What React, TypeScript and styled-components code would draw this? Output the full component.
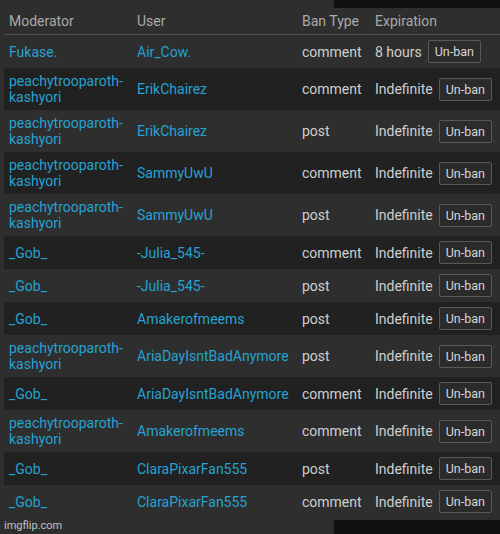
import React from "react";
import styled, { createGlobalStyle } from "styled-components";

const GlobalStyle = createGlobalStyle`
  html, body {
    margin: 0;
    padding: 0;
    background: #2e2e2e;
  }
  body {
    font-family: Roboto, "Noto Sans", "Liberation Sans", sans-serif;
    -webkit-font-smoothing: antialiased;
  }
`;

const Page = styled.div`
  width: 500px;
  height: 534px;
  overflow: hidden;
  background: #2e2e2e;
  display: flex;
  flex-direction: column;
`;

const Strip = styled.div<{ $h: number }>`
  display: flex;
  justify-content: space-between;
  align-items: flex-end;
  height: ${(p) => p.$h}px;
  flex: none;
`;

const BlackBlock = styled.div<{ $h: number }>`
  width: 166px;
  height: ${(p) => p.$h}px;
  background: #111111;
`;

const Watermark = styled.span`
  font-size: 11px;
  color: #c2c2c2;
  padding-left: 4px;
  line-height: 14px;
  align-self: center;
`;

const Table = styled.div`
  margin-left: 4px;
  display: flex;
  flex-direction: column;
`;

const Row = styled.div<{ $dark?: boolean }>`
  display: grid;
  grid-template-columns: 128px 165px 73px 1fr;
  background: ${(p) => (p.$dark ? "#212121" : "transparent")};
`;

const HeadRow = styled(Row)`
  height: 27px;
  border-bottom: 1px solid #505050;
  box-sizing: border-box;
`;

const HeadCell = styled.div`
  padding: 0 5px;
  display: flex;
  align-items: center;
  font-size: 14px;
  color: #a9a9a9;
`;

const Cell = styled.div<{ $blue?: boolean }>`
  padding: 5px;
  display: flex;
  align-items: center;
  gap: 6px;
  font-size: 14px;
  line-height: 16px;
  min-height: 23px;
  color: ${(p) => (p.$blue ? "#25a3d2" : "#cecece")};
`;

const Name = styled.span`
  overflow-wrap: normal;
`;

const UnbanButton = styled.button`
  height: 23px;
  padding: 0 6px;
  border: 1px solid #585858;
  border-radius: 2px;
  background: #2b2b2b;
  color: #d6d6d6;
  font-family: inherit;
  font-size: 12.5px;
  line-height: 21px;
  flex: none;
`;

type Ban = { mod: string; user: string; type: string; exp: string };

const bans: Ban[] = [
  { mod: "Fukase.", user: "Air_Cow.", type: "comment", exp: "8 hours" },
  { mod: "peachytrooparoth-kashyori", user: "ErikChairez", type: "comment", exp: "Indefinite" },
  { mod: "peachytrooparoth-kashyori", user: "ErikChairez", type: "post", exp: "Indefinite" },
  { mod: "peachytrooparoth-kashyori", user: "SammyUwU", type: "comment", exp: "Indefinite" },
  { mod: "peachytrooparoth-kashyori", user: "SammyUwU", type: "post", exp: "Indefinite" },
  { mod: "_Gob_", user: "-Julia_545-", type: "comment", exp: "Indefinite" },
  { mod: "_Gob_", user: "-Julia_545-", type: "post", exp: "Indefinite" },
  { mod: "_Gob_", user: "Amakerofmeems", type: "post", exp: "Indefinite" },
  { mod: "peachytrooparoth-kashyori", user: "AriaDayIsntBadAnymore", type: "post", exp: "Indefinite" },
  { mod: "_Gob_", user: "AriaDayIsntBadAnymore", type: "comment", exp: "Indefinite" },
  { mod: "peachytrooparoth-kashyori", user: "Amakerofmeems", type: "comment", exp: "Indefinite" },
  { mod: "_Gob_", user: "ClaraPixarFan555", type: "post", exp: "Indefinite" },
  { mod: "_Gob_", user: "ClaraPixarFan555", type: "comment", exp: "Indefinite" },
];

export default function App() {
  return (
    <>
      <GlobalStyle />
      <Page>
        <Strip $h={8}>
          <span />
          <BlackBlock $h={8} />
        </Strip>
        <Table>
          <HeadRow>
            <HeadCell>Moderator</HeadCell>
            <HeadCell>User</HeadCell>
            <HeadCell>Ban Type</HeadCell>
            <HeadCell>Expiration</HeadCell>
          </HeadRow>
          {bans.map((b, i) => (
            <Row key={i} $dark={i % 2 === 1}>
              <Cell $blue>
                <Name>{b.mod}</Name>
              </Cell>
              <Cell $blue>{b.user}</Cell>
              <Cell>{b.type}</Cell>
              <Cell>
                {b.exp}
                <UnbanButton>Un-ban</UnbanButton>
              </Cell>
            </Row>
          ))}
        </Table>
        <Strip $h={16}>
          <Watermark>imgflip.com</Watermark>
          <BlackBlock $h={14} />
        </Strip>
      </Page>
    </>
  );
}
